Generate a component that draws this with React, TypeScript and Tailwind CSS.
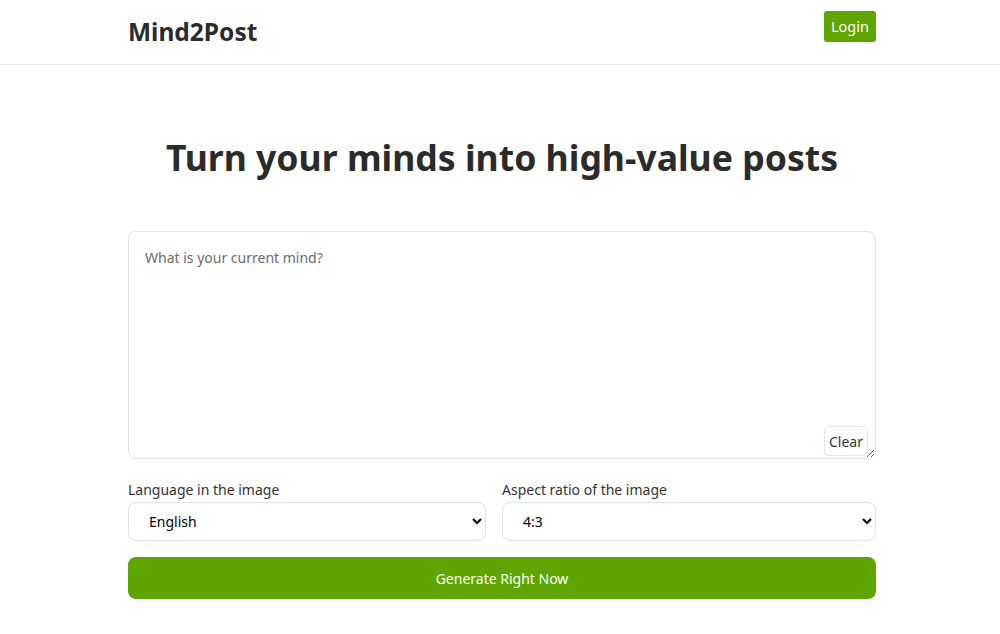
import { useState } from "react";

export default function App() {
  const [mind, setMind] = useState("");

  return (
    <div className="min-h-screen bg-white text-[#333] font-['Noto_Sans',sans-serif]">
      <header className="border-b border-[#e5e5e5]">
        <div className="ml-[128px] flex h-16 w-[748px] items-center justify-between">
          <h1 className="text-[24.5px] font-bold text-[#2b2b2b]">Mind2Post</h1>
          <button className="mb-[11px] h-[31px] rounded-[3px] bg-[#5ea500] px-[7px] text-[14.5px] text-white">
            Login
          </button>
        </div>
      </header>

      <main className="ml-[128px] w-[748px]">
        <h2 className="pt-[68px] pb-[50px] text-center text-[35.6px] font-bold leading-[48px] text-[#2b2b2b]">
          Turn your minds into high-value posts
        </h2>

        <div className="relative">
          <textarea
            value={mind}
            onChange={(e) => setMind(e.target.value)}
            placeholder="What is your current mind?"
            className="block h-[228px] w-full rounded-lg border border-[#e2e2e2] px-4 py-4 text-[14px] leading-5 outline-none placeholder:text-[#6b6b6b]"
          />
          <button
            onClick={() => setMind("")}
            className="absolute right-2 bottom-[3px] h-[30px] rounded-[4px] border border-[#e5e5e5] bg-white px-1 text-[14px] text-[#333]"
          >
            Clear
          </button>
        </div>

        <div className="mt-5 grid grid-cols-[358px_1fr] gap-4">
          <label className="flex flex-col gap-[2px] text-[14px]">
            <span>Language in the image</span>
            <select className="h-[39px] rounded-lg border border-[#e2e2e2] bg-white px-4 text-[14px] text-black">
              <option>English</option>
              <option>中文</option>
            </select>
          </label>
          <label className="flex flex-col gap-[2px] text-[14px]">
            <span>Aspect ratio of the image</span>
            <select className="h-[39px] rounded-lg border border-[#e2e2e2] bg-white px-4 text-[14px] text-black">
              <option>4:3</option>
              <option>1:1</option>
              <option>3:4</option>
            </select>
          </label>
        </div>

        <button className="mt-4 h-[42px] w-full rounded-lg bg-[#5ea500] text-[14px] text-white">
          Generate Right Now
        </button>
      </main>
    </div>
  );
}
